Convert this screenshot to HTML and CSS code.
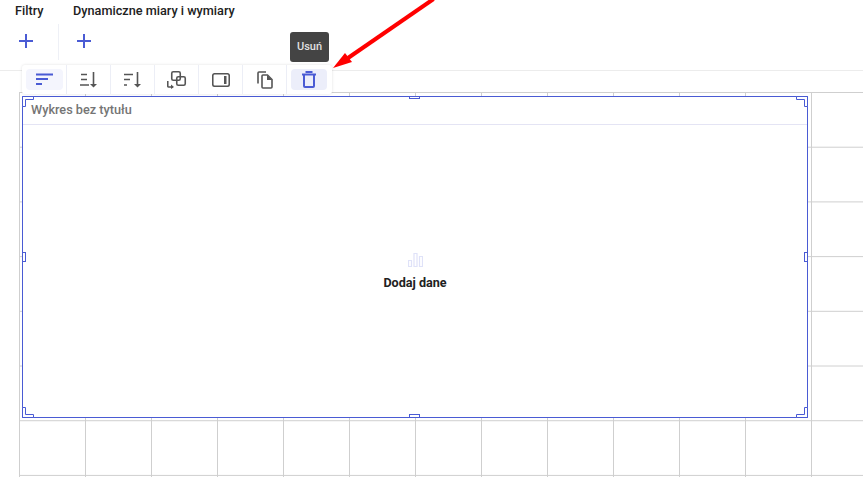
FILE: index.html
```html
<!DOCTYPE html>
<html lang="pl">
<head>
  <meta charset="UTF-8"/>
  <title>Wykres bez tytułu</title>
  <link rel="stylesheet" href="styles.css">
</head>
<body>
  <header class="topbar">
    <section class="shelf shelf-filters">
      <h2>Filtry</h2>
      <button class="add-btn" aria-label="Dodaj filtr">
        <svg width="14" height="14" viewBox="0 0 14 14"><path d="M7 0v14M0 7h14"/></svg>
      </button>
    </section>
    <section class="shelf shelf-measures">
      <h2>Dynamiczne miary i wymiary</h2>
      <button class="add-btn" aria-label="Dodaj miarę">
        <svg width="14" height="14" viewBox="0 0 14 14"><path d="M7 0v14M0 7h14"/></svg>
      </button>
    </section>
  </header>

  <main class="canvas">
    <div class="chart">
      <div class="chart-title">Wykres bez tytułu</div>
      <div class="chart-body">
        <svg class="empty-icon" width="15" height="14" viewBox="0 0 15 14">
          <path d="M.5 7.500h3v6h-3zM6 .5h3v13h-3zM11.500 3.500h3v10h-3z"/>
        </svg>
        <div class="empty-label">Dodaj dane</div>
      </div>

      <svg class="corner corner-tl" width="12" height="11" viewBox="0 0 12 11"><path d="M.5.5h11v3h-8v7h-3z"/></svg>
      <svg class="corner corner-tr" width="12" height="11" viewBox="0 0 12 11"><path d="M.5.5h11v3h-8v7h-3z"/></svg>
      <svg class="corner corner-bl" width="12" height="11" viewBox="0 0 12 11"><path d="M.5.5h11v3h-8v7h-3z"/></svg>
      <svg class="corner corner-br" width="12" height="11" viewBox="0 0 12 11"><path d="M.5.5h11v3h-8v7h-3z"/></svg>
      <span class="handle handle-top"></span>
      <span class="handle handle-bottom"></span>
      <span class="handle handle-left"></span>
      <span class="handle handle-right"></span>
    </div>
  </main>

  <div class="toolbar">
    <button class="tool tool-on">
      <svg width="18" height="18" viewBox="0 0 18 18"><path class="st" d="M1 3.500h17M1 8h12M1 13h6"/></svg>
    </button>
    <button class="tool">
      <svg width="20" height="18" viewBox="0 0 20 18"><path class="st" d="M2 3.500h6M2 8.500h6M1 14h9M14.500 1v14"/><path class="fl" d="M11 13h7l-3.500 3.500z"/></svg>
    </button>
    <button class="tool">
      <svg width="20" height="18" viewBox="0 0 20 18"><path class="st" d="M1 3.500h9M1 8.500h6M1 14h3M14.500 1v14"/><path class="fl" d="M11 13h7l-3.500 3.500z"/></svg>
    </button>
    <button class="tool">
      <svg width="20" height="19" viewBox="0 0 20 19"><rect class="st" x="4.750" y="1.750" width="8.500" height="8.500" rx="1.500"/><rect class="st" x="9.750" y="6.750" width="8.500" height="8.500" rx="1.500"/><path class="st" d="M.75 11v5a1 1 0 0 0 1 1H6"/><path class="fl" d="M4 14.500l3 2.500-3 2z"/></svg>
    </button>
    <button class="tool">
      <svg width="18" height="14" viewBox="0 0 18 14"><rect class="st" x=".75" y=".75" width="16.500" height="12.500" rx="2"/><path class="bar" d="M12 3h2.500v8H12z"/></svg>
    </button>
    <button class="tool">
      <svg width="17" height="18" viewBox="0 0 17 18"><path class="st" d="M2 12.500V2a1 1 0 0 1 1-1h7M6 5a1 1 0 0 1 1-1h4.500l4.500 4.500V16a1 1 0 0 1-1 1H7a1 1 0 0 1-1-1z"/><path class="fl" d="M11 4l5 5h-5z"/></svg>
    </button>
    <button class="tool tool-hover">
      <svg width="14" height="17" viewBox="0 0 14 17"><path class="st st-blue" d="M2 4v11a1 1 0 0 0 1 1h8a1 1 0 0 0 1-1V4M0 3.500h14M3.500 1h7"/></svg>
    </button>
  </div>

  <div class="tooltip">Usuń</div>

  <svg class="arrow" width="120" height="80" viewBox="0 0 120 80">
    <path class="arrow-line" d="M113.500 -1L28 58"/>
    <path class="arrow-head" d="M13 68L25 53L32 62z"/>
  </svg>
</body>
</html>
```

FILE: styles.css
```css
* { box-sizing:border-box; }
html, body { margin:0; padding:0; }
body { width:863px; height:477px; overflow:hidden; background:#fff; color:#212121; font-family:Roboto, "Liberation Sans", sans-serif; position:relative; }

/* top shelves */
.topbar { display:flex; height:71px; border-bottom:1px solid #ececec; padding-left:15px; }
.shelf { padding-top:4px; }
.shelf h2 { margin:0; font-size:12.7px; line-height:14px; font-weight:500; color:#212121; white-space:nowrap; }
.shelf-filters { width:43px; }
.shelf-measures { padding-left:15px; position:relative; }
.shelf-measures::before { content:""; position:absolute; left:0; top:24px; height:36px; width:1px; background:#eef0f6; }
.add-btn { display:block; margin:16px 0 0 4px; padding:0; width:14px; height:14px; border:0; background:none; line-height:0; }
.add-btn svg path { stroke:#4a5bd4; stroke-width:2; fill:none; }

/* grid canvas */
.canvas { position:relative; margin:21px 0 0 19px; height:385px;
  background-image:
    linear-gradient(to right, #cfcfcf 1px, transparent 1px),
    linear-gradient(to bottom, #cfcfcf 1px, transparent 1px);
  background-size:66px 54.714px;
}

.chart { position:absolute; left:3px; top:4px; width:786px; height:322px; background:#fff; border:1px solid #4a5bd4; display:flex; flex-direction:column; }
.chart-title { height:28px; padding:6px 8px 0; font-size:12.7px; line-height:14px; font-weight:500; color:#757575; border-bottom:1px solid #e4e4f4; }
.chart-body { flex:1; display:flex; flex-direction:column; align-items:center; padding-top:128px; }
.empty-icon path { fill:none; stroke:#dfe2f8; stroke-width:1.2; }
.empty-label { margin-top:9px; font-size:12.6px; line-height:14px; font-weight:700; color:#212121; }

/* selection handles */
.corner { position:absolute; }
.corner path { fill:#fff; stroke:#4a5bd4; stroke-width:1; }
.corner-tl { left:-1px; top:-1px; }
.corner-tr { right:-1px; top:-1px; transform:scaleX(-1); }
.corner-bl { left:-1px; bottom:-1px; transform:scaleY(-1); }
.corner-br { right:-1px; bottom:-1px; transform:scale(-1); }
.handle { position:absolute; background:#fff; border:1px solid #4a5bd4; }
.handle-top { top:-1px; left:386px; width:11px; height:3px; }
.handle-bottom { bottom:-1px; left:386px; width:11px; height:4px; }
.handle-left { left:-1px; top:155px; width:4px; height:10px; }
.handle-right { right:-1px; top:155px; width:4px; height:10px; }

/* floating toolbar */
.toolbar { position:absolute; left:22px; top:65px; width:310px; height:29px; display:flex; background:#fff; border-radius:3px; box-shadow:0 0 3px rgba(0,0,0,.12); }
.tool { flex:0 0 44px; height:29px; padding:0; border:0; border-right:1px solid #eceef6; background:none; display:flex; align-items:center; justify-content:center; position:relative; z-index:0; }
.tool:first-child { flex-basis:45px; }
.tool:last-child { border-right:0; flex:1; }
.tool-on::before, .tool-hover::before { content:""; position:absolute; left:4px; right:3px; top:4px; bottom:4px; border-radius:4px; z-index:-1; }
.tool-on::before { background:#f4f5fd; }
.tool-hover::before { left:4px; right:5px; background:#eceefa; }
.tool-hover svg { margin-right:1px; }
.st { fill:none; stroke:#555; stroke-width:1.6; }
.fl, .bar { fill:#555; }
.tool-on .st { stroke:#4a5bd4; stroke-width:2; }
.st-blue { stroke:#4a5bd4; stroke-width:2; }

.tooltip { position:absolute; left:290px; top:32px; width:39px; height:30px; background:#444; border-radius:3px; color:#e0e0e0; font-size:11px; line-height:29px; font-weight:500; text-align:center; }

.arrow { position:absolute; left:320px; top:0; overflow:hidden; }
.arrow-line { stroke:#f00; stroke-width:4; fill:none; }
.arrow-head { fill:#f00; }
```
